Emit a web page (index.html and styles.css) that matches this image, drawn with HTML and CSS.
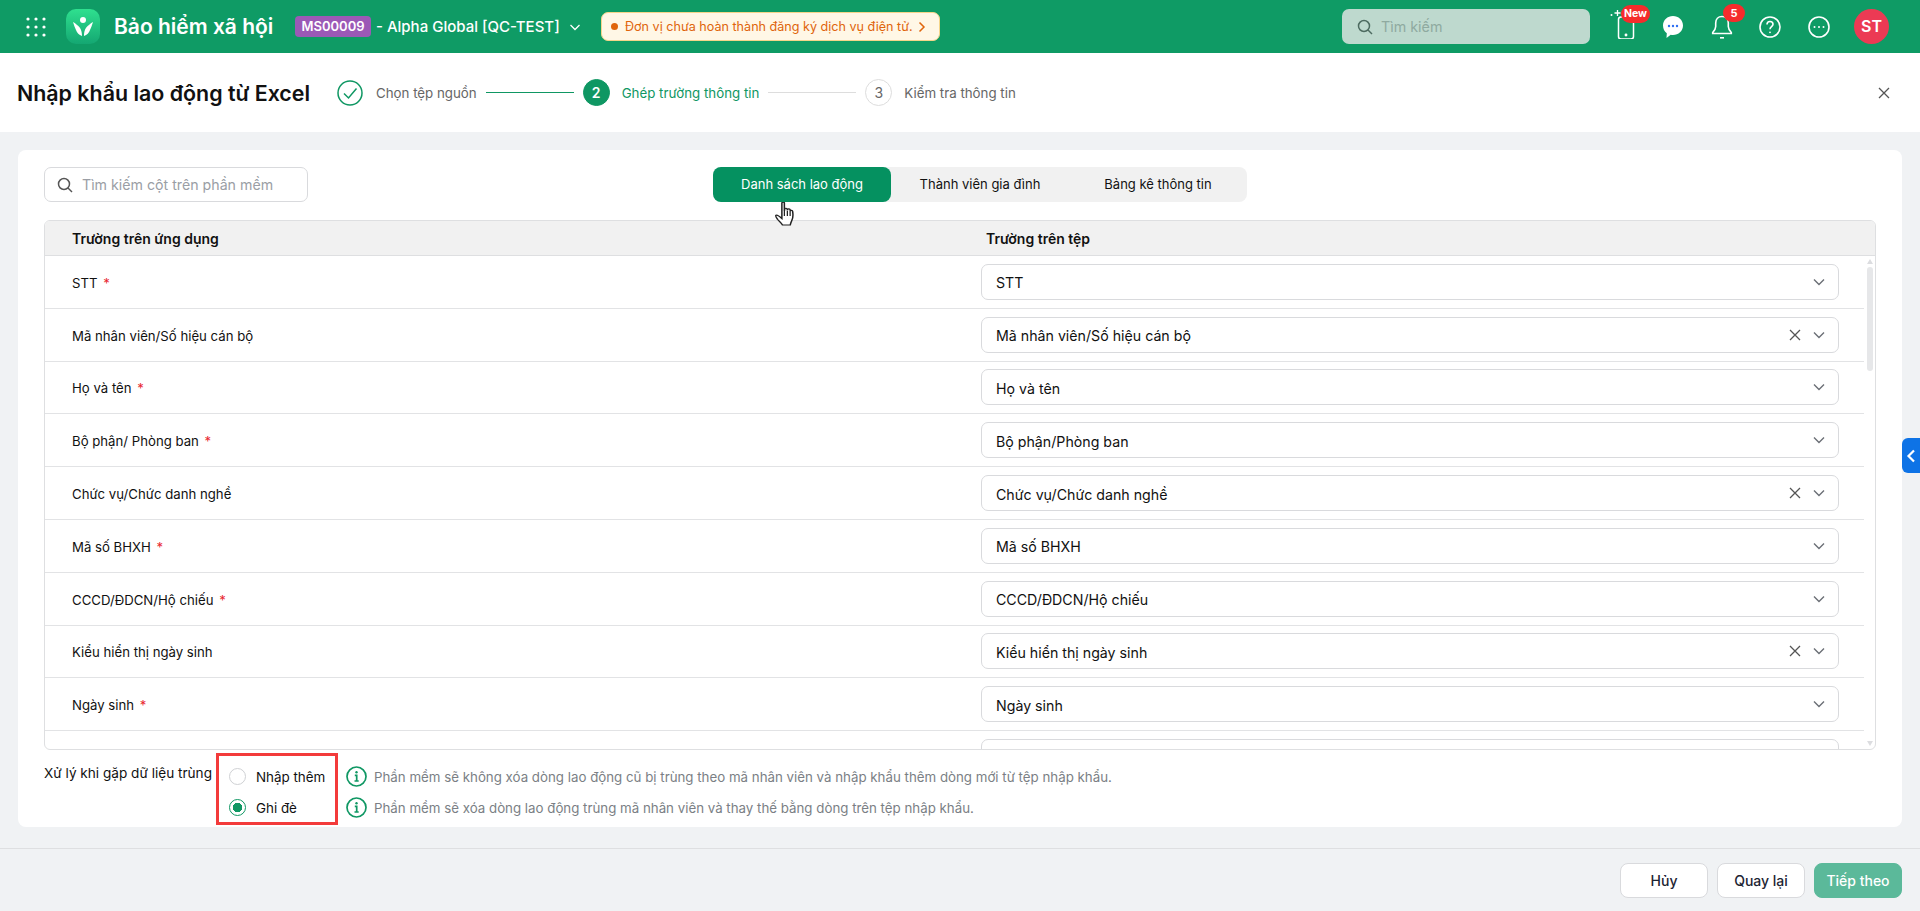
FILE: index.html
```html
<!DOCTYPE html>
<html lang="vi">
<head>
    <meta charset="UTF-8">
    <title>Nhập khẩu lao động từ Excel</title>
    <link rel="stylesheet" href="styles.css">
</head>
<body>
    <header class="topbar">
        <div class="topbar-left">
            <svg class="apps-icon" width="20" height="20" viewBox="0 0 20 20" fill="#fff">
                <circle cx="2" cy="2" r="1.6"/><circle cx="10" cy="2" r="1.6"/><circle cx="18" cy="2" r="1.6"/>
                <circle cx="2" cy="10" r="1.6"/><circle cx="10" cy="10" r="1.6"/><circle cx="18" cy="10" r="1.6"/>
                <circle cx="2" cy="18" r="1.6"/><circle cx="10" cy="18" r="1.6"/><circle cx="18" cy="18" r="1.6"/>
            </svg>
            <svg class="logo" width="34" height="35" viewBox="0 0 34 35">
                <defs>
                    <linearGradient id="logoFill" x1="0" y1="0" x2="0" y2="1">
                        <stop offset="0" stop-color="#2fe08f"/>
                        <stop offset="1" stop-color="#14a772"/>
                    </linearGradient>
                </defs>
                <rect width="34" height="35" rx="10" fill="url(#logoFill)"/>
                <circle cx="17" cy="11" r="3" fill="#fff"/>
                <path d="M7 13c2 1 3 2 4 3 3 2 5 5 5 11-3-1-5-3-6-6-1-2-2-5-3-8z" fill="#fff"/>
                <path d="M27 13c-2 1-3 2-4 3-3 2-5 5-5 11 3-1 5-3 6-6 1-2 2-5 3-8z" fill="#fff"/>
                <path d="M12 15c1.500 1 3 1.500 5 1.500s3.500-.5 5-1.500" fill="none" stroke="#1fc583" stroke-width="1"/>
            </svg>
            <span class="app-name">Bảo hiểm xã hội</span>
            <span class="org-code">MS00009</span>
            <span class="org-name">- Alpha Global [QC-TEST]</span>
            <svg class="org-chevron" width="12" height="12" viewBox="0 0 12 12" fill="none" stroke="#fff" stroke-width="1.300">
                <path d="M1.500 4l4.500 4.500L10.500 4"/>
            </svg>
            <div class="notice">
                <span class="notice-dot"></span>
                <span class="notice-text">Đơn vị chưa hoàn thành đăng ký dịch vụ điện tử.</span>
                <svg width="10" height="12" viewBox="0 0 10 12" fill="none" stroke="#e0650c" stroke-width="1.500">
                    <path d="M2.500 1.500L7 6l-4.500 4.500"/>
                </svg>
            </div>
        </div>
        <div class="topbar-right">
            <div class="global-search">
                <svg width="16" height="16" viewBox="0 0 16 16" fill="none" stroke="#4d6b60" stroke-width="1.500">
                    <circle cx="7" cy="7" r="5.500"/><path d="M11 11l4 4"/>
                </svg>
                <span>Tìm kiếm</span>
            </div>
            <div class="top-icon phone-icon">
                <svg width="28" height="30" viewBox="0 0 28 30" fill="none" stroke="#fff" stroke-width="1.500">
                    <rect x="9.500" y="8" width="15" height="22" rx="2.500"/>
                    <circle cx="17" cy="26" r=".7" fill="#fff"/>
                    <path d="M8.500 1v6M5.500 4h6" stroke-width="1.300"/>
                    <circle cx="2.500" cy="6" r="1" fill="#fff" stroke="none"/>
                </svg>
                <span class="badge badge-new">New</span>
            </div>
            <div class="top-icon chat-icon">
                <svg width="20" height="22" viewBox="0 0 20 22">
                    <path d="M10 0c5.500 0 10 4 10 9.500S15.500 19 10 19c-.8 0-1.600-.1-2.300-.3L3.500 22l.3-4.700C1.400 15.600 0 12.800 0 9.500 0 4 4.500 0 10 0z" fill="#fff"/>
                    <circle cx="6" cy="10" r="1.200" fill="#2e6ff2"/>
                    <circle cx="10" cy="10" r="1.200" fill="#2e6ff2"/>
                    <circle cx="14" cy="10" r="1.200" fill="#2e6ff2"/>
                </svg>
            </div>
            <div class="top-icon bell-icon">
                <svg width="22" height="24" viewBox="0 0 22 24" fill="none" stroke="#fff" stroke-width="1.600">
                    <path d="M11 1.500c-3.800 0-6.300 2.800-6.300 6.500v3.500c0 2-1 3.800-3 6v1h18.600v-1c-2-2.200-3-4-3-6V8c0-3.700-2.500-6.500-6.300-6.500z"/>
                    <path d="M9 22.800h4"/>
                </svg>
                <span class="badge badge-count">5</span>
            </div>
            <div class="top-icon help-icon">
                <svg width="22" height="22" viewBox="0 0 22 22" fill="none" stroke="#fff" stroke-width="1.600">
                    <circle cx="11" cy="11" r="10"/>
                    <path d="M8 8.500c0-1.800 1.300-3 3-3s3 1.200 3 2.800c0 2.400-3 2.400-3 5"/>
                    <circle cx="11" cy="16.300" r=".9" fill="#fff" stroke="none"/>
                </svg>
            </div>
            <div class="top-icon more-icon">
                <svg width="22" height="22" viewBox="0 0 22 22" fill="none" stroke="#fff" stroke-width="1.600">
                    <circle cx="11" cy="11" r="10"/>
                    <circle cx="6.500" cy="11" r="1" fill="#fff" stroke="none"/>
                    <circle cx="11" cy="11" r="1" fill="#fff" stroke="none"/>
                    <circle cx="15.500" cy="11" r="1" fill="#fff" stroke="none"/>
                </svg>
            </div>
            <div class="avatar">ST</div>
        </div>
    </header>

    <section class="subheader">
        <h1>Nhập khẩu lao động từ Excel</h1>
        <div class="steps">
            <svg class="step-done" width="26" height="26" viewBox="0 0 26 26" fill="none" stroke="#0f9763" stroke-width="1.500">
                <circle cx="13" cy="13" r="12"/>
                <path d="M7 13.500l4.500 4.500L19.500 8.500"/>
            </svg>
            <span class="step-label">Chọn tệp nguồn</span>
            <span class="step-line line-done"></span>
            <span class="step-num num-active">2</span>
            <span class="step-label label-active">Ghép trường thông tin</span>
            <span class="step-line"></span>
            <span class="step-num">3</span>
            <span class="step-label">Kiểm tra thông tin</span>
        </div>
        <svg class="close-icon" width="12" height="12" viewBox="0 0 12 12" fill="none" stroke="#555" stroke-width="1.300">
            <path d="M1 1l10 10M11 1L1 11"/>
        </svg>
    </section>

    <main class="content">
        <div class="card">
            <div class="toolbar">
                <div class="column-search">
                    <svg width="16" height="16" viewBox="0 0 16 16" fill="none" stroke="#555" stroke-width="1.500">
                        <circle cx="7" cy="7" r="5.500"/><path d="M11 11l4 4"/>
                    </svg>
                    <span>Tìm kiếm cột trên phần mềm</span>
                </div>
                <div class="tabs">
                    <div class="tab tab-active">Danh sách lao động</div>
                    <div class="tab">Thành viên gia đình</div>
                    <div class="tab">Bảng kê thông tin</div>
                </div>
            </div>

            <div class="map-table">
                <div class="map-head">
                    <div>Trường trên ứng dụng</div>
                    <div>Trường trên tệp</div>
                </div>
                <div class="map-body">
                    <div class="map-rows" id="mapRows"></div>
                    <div class="scrollbar">
                        <span class="arrow-up"></span>
                        <span class="thumb"></span>
                        <span class="arrow-down"></span>
                    </div>
                </div>
            </div>

            <div class="duplicate">
                <div class="duplicate-label">Xử lý khi gặp dữ liệu trùng</div>
                <div class="duplicate-options">
                    <div class="option">
                        <span class="radio"></span>
                        <span class="option-name">Nhập thêm</span>
                        <svg class="info" width="21" height="21" viewBox="0 0 21 21" fill="none" stroke="#0f9763" stroke-width="1.700">
                            <circle cx="10.500" cy="10.500" r="9.500"/>
                            <circle cx="10.500" cy="6.300" r="1.200" fill="#0f9763" stroke="none"/>
                            <path d="M8.800 9.300h1.900v5.500M8.500 15h4.200"/>
                        </svg>
                        <span class="option-note">Phần mềm sẽ không xóa dòng lao động cũ bị trùng theo mã nhân viên và nhập khẩu thêm dòng mới từ tệp nhập khẩu.</span>
                    </div>
                    <div class="option">
                        <span class="radio radio-on"></span>
                        <span class="option-name">Ghi đè</span>
                        <svg class="info" width="21" height="21" viewBox="0 0 21 21" fill="none" stroke="#0f9763" stroke-width="1.700">
                            <circle cx="10.500" cy="10.500" r="9.500"/>
                            <circle cx="10.500" cy="6.300" r="1.200" fill="#0f9763" stroke="none"/>
                            <path d="M8.800 9.300h1.900v5.500M8.500 15h4.200"/>
                        </svg>
                        <span class="option-note">Phần mềm sẽ xóa dòng lao động trùng mã nhân viên và thay thế bằng dòng trên tệp nhập khẩu.</span>
                    </div>
                </div>
                <div class="highlight-box"></div>
            </div>
        </div>
        <div class="side-handle">
            <svg width="10" height="14" viewBox="0 0 10 14" fill="none" stroke="#fff" stroke-width="2.200">
                <path d="M8 1.500L2.500 7 8 12.500"/>
            </svg>
        </div>
    </main>

    <footer class="footer">
        <button class="btn">Hủy</button>
        <button class="btn">Quay lại</button>
        <button class="btn btn-primary">Tiếp theo</button>
    </footer>

    <svg class="hand-cursor" width="20" height="24" viewBox="0.500 1 16 24" preserveAspectRatio="none" fill="#fff" stroke="#222" stroke-width="1.200">
        <path d="M6 2c0-1.200 2-1.200 2 0v8l.3-2c.2-1 1.900-1 2 .2l.1 1.300.2-1c.2-1 1.900-.9 2 .2l.1 1.300c.3-.9 1.800-.8 1.900.3.400 3 .2 7-.6 9-.5 1.500-1 3-1.300 4.700H6.500c-.8-2-2.300-3.500-3.800-5.500C1.500 16.500.5 15 1.300 14.300c.9-.7 2.300.5 4.700 3.200z"/>
        <path d="M8 10v5M10.400 10v5M12.600 10v5" fill="none" stroke-width="1"/>
    </svg>

    <script>
        const fields = [
            { name: 'STT', required: true, value: 'STT' },
            { name: 'Mã nhân viên/Số hiệu cán bộ', value: 'Mã nhân viên/Số hiệu cán bộ', clear: true },
            { name: 'Họ và tên', required: true, value: 'Họ và tên' },
            { name: 'Bộ phận/ Phòng ban', required: true, value: 'Bộ phận/Phòng ban' },
            { name: 'Chức vụ/Chức danh nghề', value: 'Chức vụ/Chức danh nghề', clear: true },
            { name: 'Mã số BHXH', required: true, value: 'Mã số BHXH' },
            { name: 'CCCD/ĐDCN/Hộ chiếu', required: true, value: 'CCCD/ĐDCN/Hộ chiếu' },
            { name: 'Kiểu hiển thị ngày sinh', value: 'Kiểu hiển thị ngày sinh', clear: true },
            { name: 'Ngày sinh', required: true, value: 'Ngày sinh' },
            { name: '', value: '' }
        ];

        const clearIcon = '<svg class="clear" width="12" height="12" viewBox="0 0 12 12" fill="none" stroke="#555" stroke-width="1.300"><path d="M1 1l10 10M11 1L1 11"/></svg>';
        const chevron = '<svg width="12" height="8" viewBox="0 0 12 8" fill="none" stroke="#6b6f76" stroke-width="1.400"><path d="M1 1.500l5 5 5-5"/></svg>';

        document.getElementById('mapRows').innerHTML = fields.map(f => `
            <div class="map-row">
                <div class="field-name">${f.name}${f.required ? ' <span class="required">*</span>' : ''}</div>
                <div class="select">
                    <span class="select-value">${f.value}</span>
                    ${f.clear ? clearIcon : ''}
                    ${chevron}
                </div>
            </div>`).join('');
    </script>
</body>
</html>
```

FILE: styles.css
```css
* {
    box-sizing: border-box;
}
html, body {
    height: 100%;
}
body {
    margin: 0;
    height: 911px;
    overflow: hidden;
    display: flex;
    flex-direction: column;
    position: relative;
    font-family: Inter, "Noto Sans", sans-serif;
    font-size: 13px;
    color: #111;
    background-color: #f0f2f4;
}

/* top bar */
.topbar {
    height: 53px;
    flex: none;
    display: flex;
    justify-content: space-between;
    align-items: center;
    background-color: #0f9b65;
    color: #fff;
    padding: 0 31px 0 26px;
}
.topbar-left, .topbar-right {
    display: flex;
    align-items: center;
}
.apps-icon {
    margin-right: 20px;
}
.logo {
    margin-right: 14px;
}
.app-name {
    font-size: 21px;
    font-weight: 600;
    width: 181px;
    white-space: nowrap;
}
.org-code {
    width: 76px;
    height: 21px;
    line-height: 21px;
    text-align: center;
    border-radius: 4px;
    background-color: #9b59b6;
    font-size: 13px;
    font-weight: 600;
    margin-right: 5px;
}
.org-name {
    width: 193px;
    font-size: 15px;
    font-weight: 500;
    white-space: nowrap;
}
.org-chevron {
    margin-right: 20px;
}
.notice {
    width: 339px;
    height: 29px;
    display: flex;
    align-items: center;
    padding: 0 12px 0 9px;
    border: 1px solid #f5d58a;
    border-radius: 7px;
    background-color: #fff7e6;
    color: #e0650c;
}
.notice-dot {
    width: 7px;
    height: 7px;
    margin-right: 7px;
    border-radius: 50%;
    background-color: #e0650c;
}
.notice-text {
    flex: 1;
    font-size: 12.6px;
    white-space: nowrap;
}
.global-search {
    width: 248px;
    height: 35px;
    display: flex;
    align-items: center;
    gap: 8px;
    padding-left: 15px;
    margin-right: 30px;
    border-radius: 7px;
    background-color: #bed9ce;
    font-size: 14.3px;
    color: #8faaa0;
}
.top-icon {
    position: relative;
    display: flex;
}
.phone-icon {
    margin: 0 26px 0 -11px;
    top: -3px;
}
.chat-icon {
    margin-right: 28px;
}
.bell-icon {
    margin-right: 26px;
}
.help-icon {
    margin-right: 27px;
}
.more-icon {
    margin-right: 24px;
}
.badge {
    position: absolute;
    height: 18px;
    line-height: 18px;
    text-align: center;
    border-radius: 9px;
    background-color: #f52c2c;
    color: #fff;
    font-size: 11px;
    font-weight: 700;
}
.badge-new {
    left: 12px;
    top: -4px;
    width: 29px;
    font-size: 10.500px;
}
.badge-count {
    left: 12px;
    top: -11px;
    width: 22px;
}
.avatar {
    width: 35px;
    height: 35px;
    line-height: 35px;
    text-align: center;
    border-radius: 50%;
    background-color: #ec3a54;
    font-size: 16px;
    font-weight: 600;
}

/* page title + stepper */
.subheader {
    height: 79px;
    flex: none;
    display: flex;
    align-items: center;
    padding: 0 30px 0 17px;
    background-color: #fff;
}
.subheader h1 {
    width: 320px;
    margin: 0;
    font-size: 21.4px;
    font-weight: 600;
    white-space: nowrap;
}
.steps {
    flex: 1;
    display: flex;
    align-items: center;
}
.step-done {
    margin-right: 1px;
}
.step-label {
    margin: 0 9px 0 12px;
    color: #666;
    font-size: 13.3px;
    white-space: nowrap;
}
.label-active {
    color: #0f9763;
}
.step-line {
    width: 88px;
    height: 1px;
    background-color: #ddd;
    margin-right: 9px;
}
.line-done {
    background-color: #0f9763;
}
.step-num {
    width: 27px;
    height: 27px;
    line-height: 25px;
    text-align: center;
    border: 1px solid #ddd;
    border-radius: 50%;
    color: #666;
    font-size: 14px;
}
.num-active {
    border-color: #0f9763;
    background-color: #0f9763;
    color: #fff;
    font-weight: 600;
}

/* card */
.content {
    flex: 1;
    min-height: 0;
    padding: 18px;
    position: relative;
}
.card {
    height: 677px;
    padding: 17px 26px 0 26px;
    border-radius: 8px;
    background-color: #fff;
}
.toolbar {
    height: 35px;
    display: flex;
    position: relative;
    margin-bottom: 18px;
}
.column-search {
    width: 264px;
    display: flex;
    align-items: center;
    gap: 9px;
    padding-left: 12px;
    border: 1px solid #d9dadd;
    border-radius: 7px;
    font-size: 14.2px;
    color: #9a9ea5;
}
.tabs {
    display: flex;
    width: 534px;
    margin-left: 405px;
    border-radius: 8px;
    background-color: #f1f1f1;
}
.tab {
    width: 178px;
    line-height: 35px;
    text-align: center;
    font-size: 13px;
}
.tab-active {
    border-radius: 8px;
    background-color: #059160;
    color: #fff;
}

/* mapping table */
.map-table {
    height: 530px;
    display: flex;
    flex-direction: column;
    overflow: hidden;
    border: 1px solid #dedfe1;
    border-radius: 6px;
}
.map-head {
    height: 35px;
    flex: none;
    display: grid;
    grid-template-columns: 914px 1fr;
    align-items: center;
    padding-left: 27px;
    background-color: #f1f1f1;
    border-bottom: 1px solid #dedfe1;
    font-size: 14px;
    font-weight: 600;
}
.map-body {
    flex: 1;
    min-height: 0;
    display: flex;
}
.map-rows {
    flex: 1;
    overflow: hidden;
}
.map-row {
    height: 52.8px;
    display: grid;
    grid-template-columns: 909px 858px;
    align-items: center;
    padding-left: 27px;
    border-bottom: 1px solid #e2e3e5;
}
.field-name {
    padding-top: 2px;
    font-size: 13.2px;
}
.required {
    color: #e8242c;
    margin-left: 2px;
}
.select {
    height: 36px;
    display: flex;
    align-items: center;
    gap: 12px;
    padding: 0 13px 0 14px;
    border: 1px solid #d9dadd;
    border-radius: 7px;
    background-color: #fff;
    font-size: 14.2px;
}
.select-value {
    flex: 1;
    padding-top: 2px;
}
.scrollbar {
    width: 11px;
    flex: none;
    display: flex;
    flex-direction: column;
    align-items: center;
    padding: 3px 0;
}
.thumb {
    width: 6px;
    height: 104px;
    margin-top: 3px;
    border-radius: 3px;
    background-color: #e6e7e9;
}
.arrow-up, .arrow-down {
    width: 0;
    height: 0;
    border-left: 3px solid transparent;
    border-right: 3px solid transparent;
}
.arrow-up {
    border-bottom: 5px solid #dcdde0;
}
.arrow-down {
    margin-top: auto;
    border-top: 5px solid #dcdde0;
}

/* duplicate handling */
.duplicate {
    display: flex;
    position: relative;
    padding-top: 16px;
}
.duplicate-label {
    width: 185px;
    height: 24px;
    margin-top: -5px;
    line-height: 24px;
    font-size: 13.6px;
    white-space: nowrap;
}
.duplicate-options {
    display: flex;
    flex-direction: column;
    gap: 10px;
}
.option {
    height: 21px;
    display: flex;
    align-items: center;
}
.radio {
    width: 17px;
    height: 17px;
    margin-right: 10px;
    border: 1.500px solid #cfd1d4;
    border-radius: 50%;
}
.radio-on {
    border-color: #0f9763;
    background: radial-gradient(circle, #0f9763 0 4.500px, #fff 5px);
}
.option-name {
    width: 90px;
    font-size: 13.4px;
    white-space: nowrap;
}
.option-note {
    margin-left: 7px;
    color: #7b7f85;
    font-size: 13.3px;
    white-space: nowrap;
}
.highlight-box {
    position: absolute;
    left: 172px;
    top: 3px;
    width: 122px;
    height: 72px;
    border: 3px solid #f33b3b;
}
.side-handle {
    position: absolute;
    right: 0;
    top: 306px;
    width: 18px;
    height: 35px;
    display: flex;
    align-items: center;
    justify-content: center;
    border-radius: 6px 0 0 6px;
    background-color: #0e73e6;
}

/* footer */
.footer {
    height: 63px;
    flex: none;
    display: flex;
    justify-content: flex-end;
    align-items: center;
    gap: 9px;
    padding: 0 18px 0 0;
    border-top: 1px solid #dedfe1;
}
.btn {
    width: 88px;
    height: 35px;
    padding: 0;
    border: 1px solid #d9dadd;
    border-radius: 8px;
    background-color: #fff;
    font-family: inherit;
    font-size: 14px;
    font-weight: 500;
    color: #1d2433;
}
.btn-primary {
    border-color: #5bb99a;
    background-color: #5bb99a;
    color: #fff;
}

/* mouse pointer in the capture */
.hand-cursor {
    position: absolute;
    left: 775px;
    top: 202px;
}
```
